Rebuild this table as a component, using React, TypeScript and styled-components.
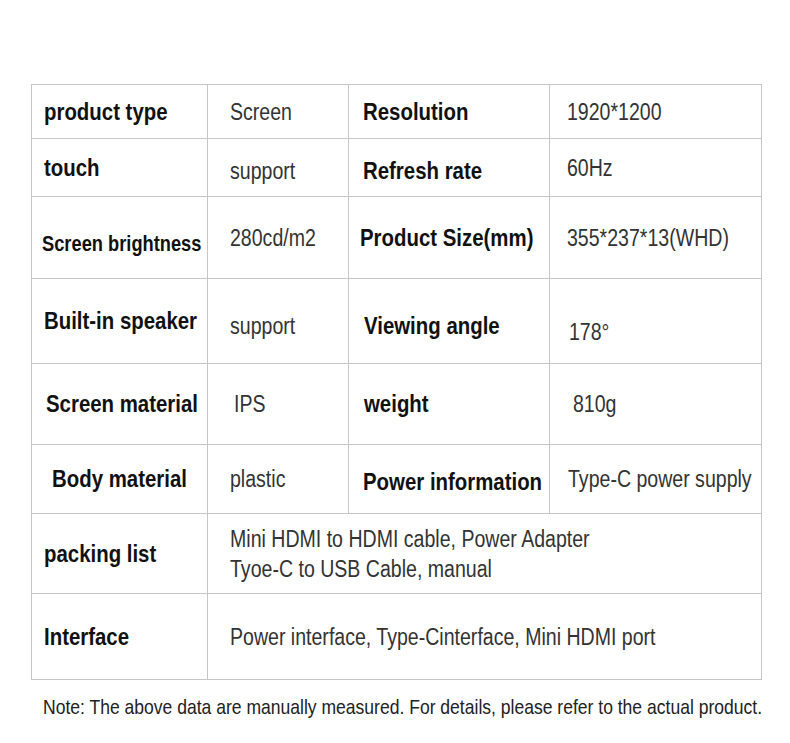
import { Fragment } from "react";
import styled, { createGlobalStyle } from "styled-components";

const GlobalStyle = createGlobalStyle`
  body {
    margin: 0;
    background: #fff;
    font-family: "Liberation Sans", Arial, sans-serif;
  }
`;

type Spec = {
  label: string;
  value: string;
  dy?: number;
  vdy?: number;
  lx?: number;
  vx?: number;
  size?: number;
};

const rows: { height: number; left: Spec; right: Spec }[] = [
  {
    height: 54,
    left: { label: "product type", value: "Screen" },
    right: { label: "Resolution", value: "1920*1200" },
  },
  {
    height: 58,
    left: { label: "touch", value: "support", vdy: 3 },
    right: { label: "Refresh rate", value: "60Hz", dy: 3 },
  },
  {
    height: 82,
    left: { label: "Screen brightness", value: "280cd/m2", dy: 6, lx: -2, size: 21.5 },
    right: { label: "Product Size(mm)", value: "355*237*13(WHD)", lx: -3 },
  },
  {
    height: 85,
    left: { label: "Built-in speaker", value: "support", vdy: 5 },
    right: { label: "Viewing angle", value: "178°", dy: 5, vdy: 11, lx: 1, vx: 2 },
  },
  {
    height: 81,
    left: { label: "Screen material", value: "IPS", lx: 2, vx: 4 },
    right: { label: "weight", value: "810g", lx: 1, vx: 6 },
  },
  {
    height: 69,
    left: { label: "Body material", value: "plastic", lx: 8 },
    right: { label: "Power information", value: "Type-C power supply", dy: 3, vx: 1 },
  },
];

const Page = styled.div`
  padding: 84px 29px 20px 31px;
  overflow: hidden;
`;

const Table = styled.div`
  display: grid;
  grid-template-columns: 176px 141px 201px 212px;
  width: 730px;
  border-top: 1px solid #c6c6c6;
  border-left: 1px solid #c6c6c6;
`;

const Cell = styled.div<{ $h: number; $span?: number; $pad: number }>`
  grid-column: span ${(p) => p.$span ?? 1};
  height: ${(p) => p.$h}px;
  box-sizing: border-box;
  border-right: 1px solid #c6c6c6;
  border-bottom: 1px solid #c6c6c6;
  padding-left: ${(p) => p.$pad}px;
  display: flex;
  flex-direction: column;
  justify-content: center;
  align-items: flex-start;
`;

const Label = styled.span<{ $dy?: number; $dx?: number; $size?: number }>`
  display: inline-block;
  font-weight: 700;
  font-size: ${(p) => p.$size ?? 24}px;
  line-height: 30px;
  color: #111;
  white-space: nowrap;
  transform-origin: left center;
  transform: translate(${(p) => p.$dx ?? 0}px, ${(p) => p.$dy ?? 0}px) scaleX(0.85);
`;

const Value = styled.span<{ $dy?: number; $dx?: number }>`
  display: inline-block;
  font-size: 23px;
  line-height: 30px;
  color: #333;
  white-space: nowrap;
  transform-origin: left center;
  transform: translate(${(p) => p.$dx ?? 0}px, ${(p) => p.$dy ?? 0}px) scaleX(0.85);
`;

const Note = styled.p`
  display: inline-block;
  margin: 14px 0 0 12px;
  font-size: 21px;
  line-height: 26px;
  color: #222;
  white-space: nowrap;
  transform-origin: left center;
  transform: scaleX(0.835);
`;

export default function App() {
  return (
    <Page>
      <GlobalStyle />
      <Table>
        {rows.map((r) => (
          <Fragment key={r.left.label}>
            <Cell $h={r.height} $pad={12}>
              <Label $dy={r.left.dy} $dx={r.left.lx} $size={r.left.size}>
                {r.left.label}
              </Label>
            </Cell>
            <Cell $h={r.height} $pad={22}>
              <Value $dy={r.left.vdy} $dx={r.left.vx}>{r.left.value}</Value>
            </Cell>
            <Cell $h={r.height} $pad={14}>
              <Label $dy={r.right.dy} $dx={r.right.lx}>{r.right.label}</Label>
            </Cell>
            <Cell $h={r.height} $pad={17}>
              <Value $dy={r.right.vdy} $dx={r.right.vx}>{r.right.value}</Value>
            </Cell>
          </Fragment>
        ))}
        <Cell $h={80} $pad={12}>
          <Label>packing list</Label>
        </Cell>
        <Cell $h={80} $pad={22} $span={3}>
          <Value>Mini HDMI to HDMI cable, Power Adapter</Value>
          <Value>Tyoe-C to USB Cable, manual</Value>
        </Cell>
        <Cell $h={86} $pad={12}>
          <Label>Interface</Label>
        </Cell>
        <Cell $h={86} $pad={22} $span={3}>
          <Value>Power interface, Type-Cinterface, Mini HDMI port</Value>
        </Cell>
      </Table>
      <Note>Note: The above data are manually measured. For details, please refer to the actual product.</Note>
    </Page>
  );
}
